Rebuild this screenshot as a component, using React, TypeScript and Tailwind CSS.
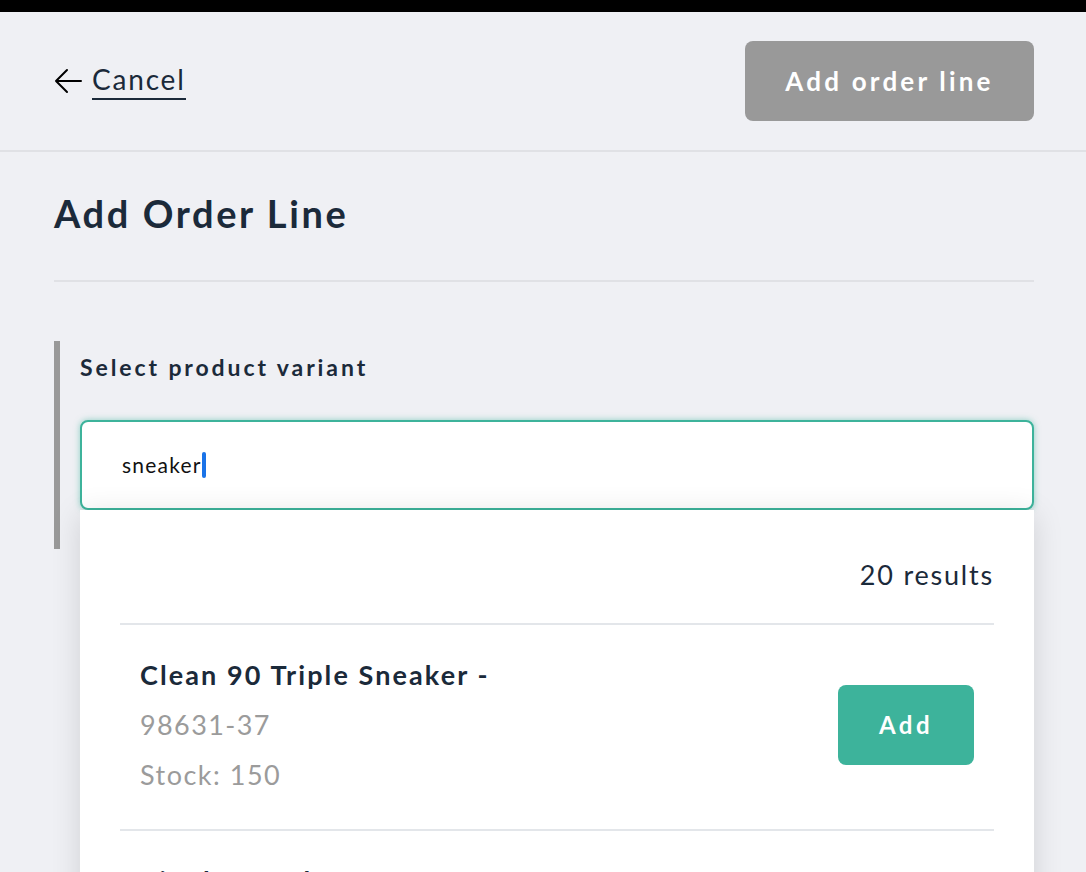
const font = { fontFamily: 'Lato, "Open Sans", sans-serif' };

function ResultItem({ name, sku, stock }: { name: string; sku: string; stock: number }) {
  return (
    <div className="flex items-center justify-between border-b-2 border-[#e3e6ea] pl-5 pr-5 pt-[25px] pb-[29px]">
      <div>
        <div className="text-[27px] leading-[50px] font-bold text-[#1b2a3a] tracking-[2.1px]">{name}</div>
        <div className="text-[27px] leading-[50px] text-[#9b9b9b] tracking-[1.4px]">{sku}</div>
        <div className="text-[27px] leading-[50px] text-[#9b9b9b] tracking-[1.5px]">Stock: {stock}</div>
      </div>
      <button className="w-[136px] h-20 rounded-lg bg-[#3db39b] text-white text-[24px] font-bold tracking-[3.5px]">
        Add
      </button>
    </div>
  );
}

export default function App() {
  return (
    <div className="min-h-screen bg-[#eff0f4] overflow-hidden" style={font}>
      <div className="h-3 bg-black" />
      <header className="h-[140px] flex items-center justify-between pl-[54px] pr-[52px] border-b-2 border-[#e0e1e5]">
        <a className="flex items-center gap-[10px] text-[#1b2a3a]">
          <svg width="28" height="28" viewBox="0 0 28 28" fill="none" stroke="#000" strokeWidth="2" strokeLinecap="round" strokeLinejoin="round">
            <path d="M27 14H2M13 3L2 14l11 11" />
          </svg>
          <span className="text-[28px] leading-[34px] tracking-[1.8px] border-b-2 border-[#1b2a3a] pb-[2px]">Cancel</span>
        </a>
        <button className="w-[289px] h-20 rounded-lg bg-[#999999] text-white text-[26px] font-bold tracking-[3.2px]">
          Add order line
        </button>
      </header>

      <main className="pl-[54px] pr-[52px]">
        <h1 className="pt-[38px] pb-[44px] text-[38px] leading-[46px] font-bold text-[#1b2a3a] tracking-[2.6px] border-b-2 border-[#e0e1e5]">
          Add Order Line
        </h1>

        <section className="mt-[59px] border-l-[6px] border-[#999999] pl-5 pt-[12px] pb-[39px]">
          <label className="block text-[23px] leading-[28px] font-bold text-[#1b2a3a] tracking-[2.9px]">
            Select product variant
          </label>
          <div className="relative mt-[39px]">
            <div className="h-[90px] flex items-center px-10 bg-white rounded-lg border-2 border-[#3db39b] shadow-[0_0_6px_rgba(61,179,155,0.55)]">
              <span className="text-[21px] text-[#111] tracking-[1.2px]">sneaker</span>
              <span className="w-[4px] h-[26px] bg-[#1a73e8] rounded-sm" />
            </div>
            <div className="absolute left-0 right-0 top-full bg-white px-10 shadow-[0_4px_28px_rgba(0,0,0,0.13)] z-10">
              <div className="pt-[48px] pb-[31px] text-right text-[27px] leading-[34px] text-[#1b2a3a] tracking-[1.8px] border-b-2 border-[#e3e6ea]">
                20 results
              </div>
              <ResultItem name="Clean 90 Triple Sneaker -" sku="98631-37" stock={150} />
              <ResultItem name="Ripple Sneaker -" sku="98632-38" stock={120} />
            </div>
          </div>
        </section>
      </main>
    </div>
  );
}
